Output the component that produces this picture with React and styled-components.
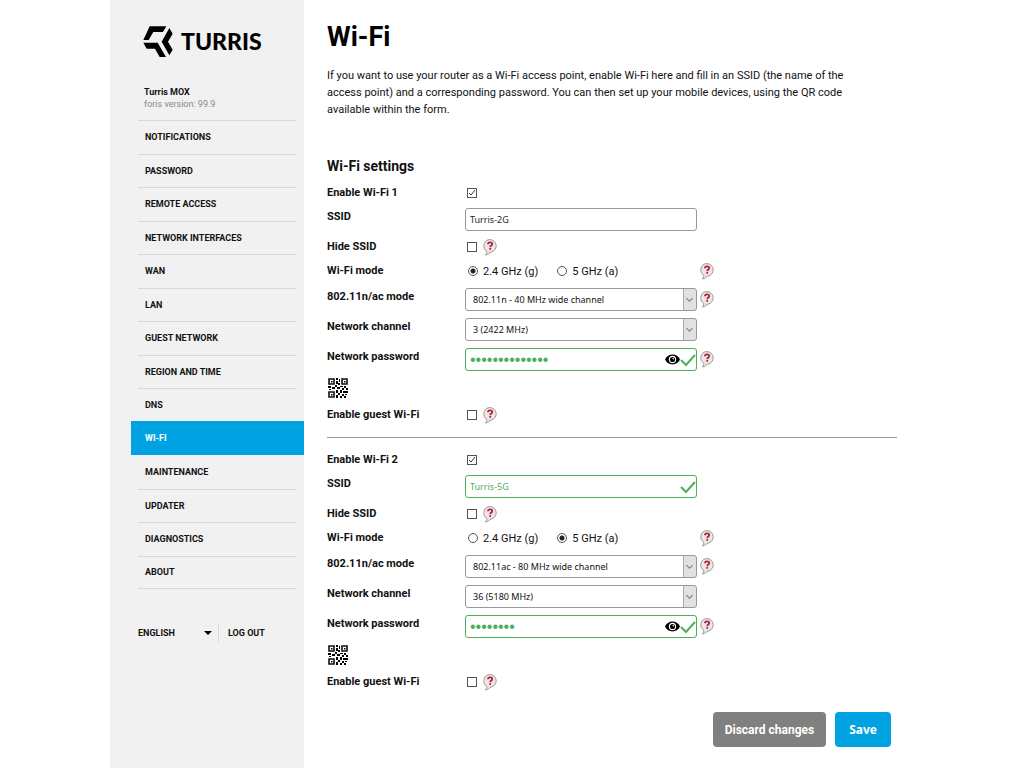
import React, { useState } from 'react'
import styled, { createGlobalStyle, css } from 'styled-components'

const GREEN = '#4caf5a'
const BLUE = '#00a2e2'

const GlobalStyle = createGlobalStyle`
  * {
    box-sizing: border-box;
  }
  body {
    margin: 0;
    background: #fff;
    color: #111;
    font-family: Roboto, sans-serif;
    font-size: 11px;
  }
`

const Page = styled.div`
  display: flex;
  max-width: 804px;
  min-height: 100vh;
  margin: 0 auto;
`

const Sidebar = styled.aside`
  flex: 0 0 194px;
  padding-top: 26px;
  background: #f1f1f1;
`

const Logo = styled.a`
  display: flex;
  align-items: center;
  gap: 8px;
  height: 31px;
  margin-left: 33px;
  color: #000;
  font-family: Lato, sans-serif;
  font-size: 23px;
  font-weight: 900;
  line-height: 31px;
  text-decoration: none;
`

const Device = styled.div`
  margin: 29px 0 10px 34px;
  font-size: 9px;
  line-height: 12px;
  color: #888;

  strong {
    display: block;
    color: #111;
  }
`

const Menu = styled.ul`
  display: grid;
  grid-auto-rows: 1fr;
  height: 469px;
  margin: 0 0 0 21px;
  padding: 0;
  list-style: none;
`

const MenuItem = styled.li`
  display: flex;
  margin: 0 8px 0 7px;
  border-top: 1px solid #d8d8d8;

  &:last-child {
    border-bottom: 1px solid #d8d8d8;
  }
  ${(p) => p.$active && css`
    margin: -1px 0 0;
    border-color: ${BLUE};
    background: ${BLUE};

    & + li {
      border-color: transparent;
    }
  `}
`

const MenuLink = styled.a`
  flex: 1;
  display: flex;
  align-items: center;
  padding-left: ${(p) => (p.$active ? 14 : 7)}px;
  color: ${(p) => (p.$active ? '#fff' : '#111')};
  font-size: 9px;
  font-weight: 700;
  text-decoration: none;
  text-transform: uppercase;
`

const SidebarFooter = styled.div`
  display: flex;
  align-items: center;
  margin: 35px 0 0 28px;
  font-size: 9px;
  font-weight: 700;

  a {
    padding-left: 9px;
    border-left: 1px solid #d8d8d8;
    color: #111;
    line-height: 18px;
    text-decoration: none;
  }
`

const Language = styled.select`
  appearance: none;
  width: 74px;
  height: 18px;
  margin-right: 6px;
  padding: 0;
  border: 0;
  background: url("data:image/svg+xml,%3Csvg xmlns='http://www.w3.org/2000/svg' width='8' height='4'%3E%3Cpath d='M0 0h8L4 4z'/%3E%3C/svg%3E") no-repeat right center;
  color: #111;
  font: 700 9px Roboto, sans-serif;
`

const Main = styled.main`
  flex: 1;
  min-width: 0;
  padding: 20px 17px 20px 23px;
`

const Title = styled.h1`
  margin: 0 0 12px;
  font-size: 27px;
  line-height: 35px;
  color: #000;
`

const Intro = styled.p`
  max-width: 552px;
  margin: 0 0 38px;
  font-size: 11px;
  line-height: 17px;
`

const Subtitle = styled.h2`
  margin: 0 0 4px;
  font-size: 14px;
  line-height: 20px;
`

const Divider = styled.hr`
  margin: 11px 0 9px;
  border: 0;
  border-top: 1px solid #999;
`

const Row = styled.div`
  display: grid;
  grid-template-columns: 138px 1fr;
  align-items: ${(p) => (p.$tall ? 'start' : 'center')};
  height: ${(p) => (p.$tall ? 30 : p.$mode ? 26 : 24)}px;
`

const Label = styled.label`
  font-size: 11px;
  font-weight: 700;
  line-height: 26px;
`

const Controls = styled.div`
  display: flex;
  align-items: center;
  gap: 3px;
  padding-top: ${(p) => (p.$tall ? 4 : 0)}px;
`

const Checkbox = styled.input`
  appearance: none;
  width: 10px;
  height: 10px;
  margin: 0 3px 0 2px;
  border: 1px solid #555;
  background: #fff;

  &:checked {
    background: #fff url("data:image/svg+xml,%3Csvg xmlns='http://www.w3.org/2000/svg' width='8' height='8'%3E%3Cpath d='M1 4l2 2 4-5' fill='none' stroke='%23333'/%3E%3C/svg%3E") center no-repeat;
  }
`

const Radios = styled.div`
  display: flex;
  gap: 19px;
  width: 232px;
  padding-left: 3px;
`

const RadioLabel = styled.label`
  display: flex;
  align-items: center;
  gap: 5px;
  font-size: 11px;
`

const Radio = styled.input`
  appearance: none;
  width: 10px;
  height: 10px;
  margin: 0;
  border: 1px solid #555;
  border-radius: 50%;

  &:checked {
    background: radial-gradient(circle, #222 2px, transparent 3px);
  }
`

const Field = styled.div`
  display: flex;
  align-items: center;
  width: 232px;
  height: 23px;
  overflow: hidden;
  border: 1px solid ${(p) => (p.$valid ? GREEN : '#999')};
  border-radius: 3px;
  background: #fff;
`

const TextInput = styled.input`
  flex: 1;
  min-width: 0;
  height: 100%;
  padding: 0 0 0 4px;
  border: 0;
  outline: 0;
  background: transparent;
  color: ${(p) => (p.$valid ? GREEN : '#222')};
  font: 9px "Noto Sans", sans-serif;

  &[type='password'] {
    font: 16px "Liberation Sans", sans-serif;
  }
`

const EyeButton = styled.button`
  display: flex;
  padding: 0;
  border: 0;
  background: none;
`

const Select = styled.select`
  appearance: none;
  width: 232px;
  height: 23px;
  padding: 0 16px 0 7px;
  border: 1px solid #999;
  border-radius: 3px;
  background: #fff url("data:image/svg+xml,%3Csvg xmlns='http://www.w3.org/2000/svg' width='13' height='22'%3E%3Cpath fill='%23e1e1e1' d='M0 0h13v22H0z'/%3E%3Cpath d='M.5 0v22' stroke='%23aaa'/%3E%3Cpath d='M3.500 9.500l3 3 3-3' fill='none' stroke='%23777'/%3E%3C/svg%3E") right center no-repeat;
  color: #111;
  font: 9px "Noto Sans", sans-serif;
`

const QrRow = styled.div`
  display: flex;
  align-items: center;
  height: 28px;

  button {
    display: flex;
    padding: 0 0 0 1px;
    border: 0;
    background: none;
  }
`

const Actions = styled.div`
  display: flex;
  justify-content: flex-end;
  gap: 9px;
  margin-top: 19px;
  padding-right: 6px;
`

const Button = styled.button`
  height: 35px;
  padding: 0 ${(p) => (p.$primary ? 14 : 12)}px;
  border: 0;
  border-radius: 4px;
  background: ${(p) => (p.$primary ? BLUE : '#808080')};
  color: #fff;
  font: 700 12px ${(p) => (p.$primary ? '"Noto Sans"' : 'Roboto')}, sans-serif;
`

function LogoMark() {
  return (
    <svg width="30" height="31" viewBox="101 78 90 93" aria-hidden="true">
      <path d="M121 79h50l-10 17h-29l-14 24h-16z" />
      <path d="M180 84l10 17-14 24 14 24-10 17-23-41z" />
      <path d="M102 128h43l25 43h-19l-14-25h-25z" />
    </svg>
  )
}

function Help() {
  return (
    <svg width="14" height="17" viewBox="0 0 14 17" role="img" aria-label="Help">
      <path
        d="M7 .6a6.300 6.300 0 0 1 1 12.500c-1.500.8-3 2.400-5.600 2.900 1-1 1.500-2.200 1.500-3.700A6.300 6.300 0 0 1 7 .6z"
        fill="#f0e6e6"
        stroke="#999"
      />
      <path
        d="M4.900 5.300c0-2.600 4.400-2.600 4.400-.3 0 1.500-2 1.500-2.100 3.100M7.200 9v1.700"
        fill="none"
        stroke="#b0203a"
        strokeWidth="1.700"
      />
    </svg>
  )
}

function Eye() {
  return (
    <svg width="15" height="11" viewBox="0 0 15 11" aria-hidden="true">
      <path d="M0 5.500C3-1.200 12-1.200 15 5.500 12 12 3 12 0 5.500z" />
      <circle cx="7.500" cy="5.500" r="3.100" fill="none" stroke="#fff" strokeWidth="1.100" />
      <circle cx="8.300" cy="4.600" r=".8" fill="#fff" />
    </svg>
  )
}

function Tick() {
  return (
    <svg width="16" height="14" viewBox="0 0 16 14" aria-hidden="true">
      <path d="M1 7l5 5 9-10" fill="none" stroke={GREEN} strokeWidth="2" />
    </svg>
  )
}

function QrCode() {
  return (
    <svg width="20" height="20" viewBox="0 0 20 20" aria-hidden="true">
      <path d="M1 1h5v5H1zM14 1h5v5h-5zM1 14h5v5H1z" fill="none" stroke="#111" strokeWidth="1.600" />
      <path d="M3 3h1.500v1.500H3zM16 3h1.500v1.500H16zM3 16h1.500v1.500H3zM8 0h2v2H8zM11 1h1v3h-1zM8 3h2v3H8zM10 5h2v2h-2zM0 8h3v2H0zM4 9h3v2H4zM1 11h2v1H1zM7 7h2v2H7zM9 9h3v2H9zM12 8h3v1h-3zM16 8h2v2h-2zM18 10h2v2h-2zM14 10h2v2h-2zM8 12h2v3H8zM10 15h2v2h-2zM8 17h2v3H8zM12 12h2v3h-2zM15 13h3v2h-3zM14 16h2v2h-2zM17 16h2v1h-2zM12 18h2v2h-2zM16 18h2v2h-2zM18 13h2v2h-2z" />
    </svg>
  )
}

const menu = [
  'Notifications',
  'Password',
  'Remote access',
  'Network interfaces',
  'WAN',
  'LAN',
  'Guest network',
  'Region and time',
  'DNS',
  'Wi-Fi',
  'Maintenance',
  'Updater',
  'Diagnostics',
  'About',
]

const radios = [
  { id: 1, ssid: 'Turris-2G', band: 'g', mode: '802.11n - 40 MHz wide channel', channel: '3 (2422 MHz)', password: 'turrisnetwork1' },
  { id: 2, ssid: 'Turris-5G', ssidValid: true, band: 'a', mode: '802.11ac - 80 MHz wide channel', channel: '36 (5180 MHz)', password: 'turris5g' },
]

function CheckRow({ id, label, checked, help }) {
  return (
    <Row>
      <Label htmlFor={id}>{label}</Label>
      <Controls>
        <Checkbox type="checkbox" id={id} defaultChecked={checked} />
        {help && <Help />}
      </Controls>
    </Row>
  )
}

function SelectRow({ id, label, value, help }) {
  return (
    <Row $tall>
      <Label htmlFor={id}>{label}</Label>
      <Controls $tall>
        <Select id={id}>
          <option>{value}</option>
        </Select>
        {help && <Help />}
      </Controls>
    </Row>
  )
}

function WifiSection({ data }) {
  const [shown, setShown] = useState(false)
  const key = (name) => `${name}-${data.id}`

  return (
    <section>
      <CheckRow id={key('enable')} label={`Enable Wi-Fi ${data.id}`} checked />
      <Row $tall>
        <Label htmlFor={key('ssid')}>SSID</Label>
        <Controls $tall>
          <Field $valid={data.ssidValid}>
            <TextInput id={key('ssid')} defaultValue={data.ssid} $valid={data.ssidValid} />
            {data.ssidValid && <Tick />}
          </Field>
        </Controls>
      </Row>
      <CheckRow id={key('hide')} label="Hide SSID" help />
      <Row $mode>
        <Label as="span" id={key('band')}>Wi-Fi mode</Label>
        <Controls>
          <Radios role="radiogroup" aria-labelledby={key('band')}>
            <RadioLabel>
              <Radio type="radio" name={key('band')} defaultChecked={data.band === 'g'} />
              2.4 GHz (g)
            </RadioLabel>
            <RadioLabel>
              <Radio type="radio" name={key('band')} defaultChecked={data.band === 'a'} />
              5 GHz (a)
            </RadioLabel>
          </Radios>
          <Help />
        </Controls>
      </Row>
      <SelectRow id={key('mode')} label="802.11n/ac mode" value={data.mode} help />
      <SelectRow id={key('channel')} label="Network channel" value={data.channel} />
      <Row $tall>
        <Label htmlFor={key('password')}>Network password</Label>
        <Controls $tall>
          <Field $valid>
            <TextInput
              id={key('password')}
              type={shown ? 'text' : 'password'}
              defaultValue={data.password}
              $valid
            />
            <EyeButton type="button" aria-label="Show password" onClick={() => setShown(!shown)}>
              <Eye />
            </EyeButton>
            <Tick />
          </Field>
          <Help />
        </Controls>
      </Row>
      <QrRow>
        <button type="button" aria-label="Show QR code">
          <QrCode />
        </button>
      </QrRow>
      <CheckRow id={key('guest')} label="Enable guest Wi-Fi" help />
    </section>
  )
}

export default function App() {
  return (
    <>
      <GlobalStyle />
      <Page>
        <Sidebar>
          <Logo href="#">
            <LogoMark />
            TURRIS
          </Logo>
          <Device>
            <strong>Turris MOX</strong>
            foris version: 99.9
          </Device>
          <nav>
            <Menu>
              {menu.map((item) => (
                <MenuItem key={item} $active={item === 'Wi-Fi'}>
                  <MenuLink href="#" $active={item === 'Wi-Fi'}>{item}</MenuLink>
                </MenuItem>
              ))}
            </Menu>
          </nav>
          <SidebarFooter>
            <Language aria-label="Language">
              <option>ENGLISH</option>
            </Language>
            <a href="#">LOG OUT</a>
          </SidebarFooter>
        </Sidebar>
        <Main>
          <Title>Wi-Fi</Title>
          <Intro>
            If you want to use your router as a Wi-Fi access point, enable Wi-Fi here and fill in an SSID (the name of the
            access point) and a corresponding password. You can then set up your mobile devices, using the QR code
            available within the form.
          </Intro>
          <form onSubmit={(e) => e.preventDefault()}>
            <Subtitle>Wi-Fi settings</Subtitle>
            <WifiSection data={radios[0]} />
            <Divider />
            <WifiSection data={radios[1]} />
            <Actions>
              <Button type="reset">Discard changes</Button>
              <Button type="submit" $primary>Save</Button>
            </Actions>
          </form>
        </Main>
      </Page>
    </>
  )
}
